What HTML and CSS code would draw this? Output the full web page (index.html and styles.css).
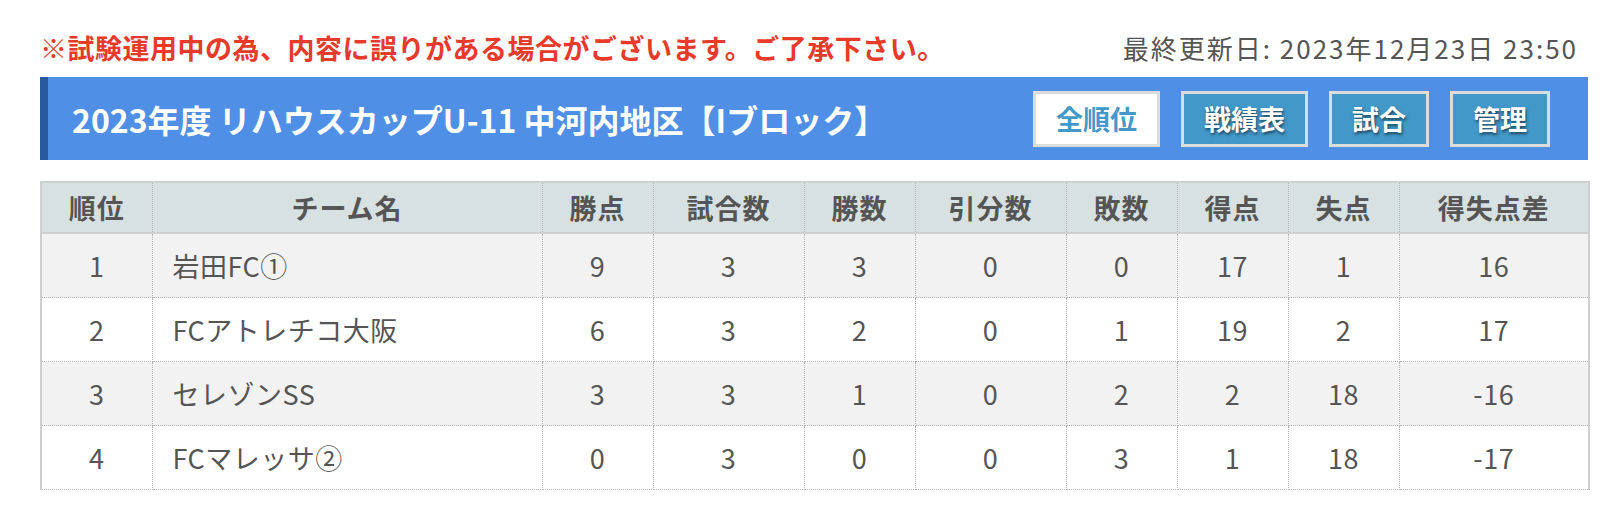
FILE: index.html
```html
<!DOCTYPE html>
<html lang="ja">
<head>
<meta charset="utf-8">
<title>順位表</title>
<link rel="stylesheet" href="styles.css">
</head>
<body>
<div class="page">
  <div class="topline">
    <p class="notice">※試験運用中の為、内容に誤りがある場合がございます。ご了承下さい。</p>
    <p class="updated">最終更新日: 2023年12月23日 23:50</p>
  </div>
  <div class="titlebar">
    <h1 class="title">2023年度 リハウスカップU-11 中河内地区【Iブロック】</h1>
    <nav class="buttons">
      <a class="btn btn-active">全順位</a>
      <a class="btn">戦績表</a>
      <a class="btn">試合</a>
      <a class="btn">管理</a>
    </nav>
  </div>
  <table class="standings">
    <colgroup>
      <col class="c-rank"><col class="c-team"><col class="c-2"><col class="c-3"><col class="c-2"><col class="c-3"><col class="c-2"><col class="c-2"><col class="c-2"><col class="c-4">
    </colgroup>
    <thead>
      <tr><th>順位</th><th>チーム名</th><th>勝点</th><th>試合数</th><th>勝数</th><th>引分数</th><th>敗数</th><th>得点</th><th>失点</th><th>得失点差</th></tr>
    </thead>
    <tbody>
      <tr><td>1</td><td class="team">岩田FC①</td><td>9</td><td>3</td><td>3</td><td>0</td><td>0</td><td>17</td><td>1</td><td>16</td></tr>
      <tr><td>2</td><td class="team">FCアトレチコ大阪</td><td>6</td><td>3</td><td>2</td><td>0</td><td>1</td><td>19</td><td>2</td><td>17</td></tr>
      <tr><td>3</td><td class="team">セレゾンSS</td><td>3</td><td>3</td><td>1</td><td>0</td><td>2</td><td>2</td><td>18</td><td>-16</td></tr>
      <tr><td>4</td><td class="team">FCマレッサ②</td><td>0</td><td>3</td><td>0</td><td>0</td><td>3</td><td>1</td><td>18</td><td>-17</td></tr>
    </tbody>
  </table>
</div>
</body>
</html>
```

FILE: styles.css
```css
html, body {
  margin: 0;
  padding: 0;
  background: #fff;
}
body {
  font-family: "Noto Sans CJK JP", "Noto Sans", sans-serif;
  color: #555;
}
.page {
  padding: 0 32px 0 40px;
}
.topline {
  height: 77px;
  box-sizing: border-box;
  padding-top: 30px;
  display: flex;
  justify-content: space-between;
  align-items: baseline;
}
.topline p {
  margin: 0;
  line-height: 36px;
}
.notice {
  color: #e73a2b;
  font-weight: 700;
  font-size: 27px;
  letter-spacing: 0.5px;
}
.updated {
  font-size: 26px;
  letter-spacing: 2px;
  color: #555;
  padding-right: 10px;
}
.titlebar {
  height: 83px;
  box-sizing: border-box;
  background: #4f8fe6;
  border-left: 8px solid #2a5a9e;
  padding: 0 38px 0 24px;
  display: flex;
  align-items: center;
  justify-content: space-between;
}
.title {
  margin: 0;
  color: #fff;
  font-size: 32px;
  font-weight: 700;
  line-height: 1;
}
.buttons {
  display: flex;
  gap: 21px;
}
.btn {
  display: block;
  height: 56px;
  box-sizing: border-box;
  border: 3px solid #dcdcdc;
  padding: 0 20px;
  background: #4298c8;
  color: #fff;
  font-size: 27px;
  font-weight: 700;
  line-height: 50px;
  text-shadow: 1px 2px 3px rgba(0, 0, 0, 0.55);
}
.btn-active {
  background: #fff;
  color: #4399c8;
  text-shadow: none;
}
.standings {
  margin-top: 21px;
  width: 100%;
  table-layout: fixed;
  border-collapse: collapse;
  border-top: 2px solid #cfcfcf;
  border-left: 2px solid #cfcfcf;
  border-right: 2px solid #cfcfcf;
}
.c-rank { width: 111px; }
.c-team { width: 390px; }
.c-2 { width: 111px; }
.c-3 { width: 151px; }
.c-4 { width: 190px; }
.standings th,
.standings td {
  text-align: center;
  border-left: 1px dotted #b5b5b5;
  border-right: 1px dotted #b5b5b5;
  padding: 0;
}
.standings th {
  height: 49px;
  background: #d8e1e1;
  font-size: 27px;
  letter-spacing: 1px;
  font-weight: 700;
  color: #555;
  border-bottom: 2px solid #cfcfcf;
}
.standings td {
  height: 63px;
  font-size: 27px;
  letter-spacing: 0.5px;
  border-bottom: 1px dotted #b5b5b5;
  color: #555;
}
.standings tbody tr:nth-child(odd) td {
  background: #f2f2f2;
}
.standings td.team {
  text-align: left;
  padding-left: 20px;
}
```
